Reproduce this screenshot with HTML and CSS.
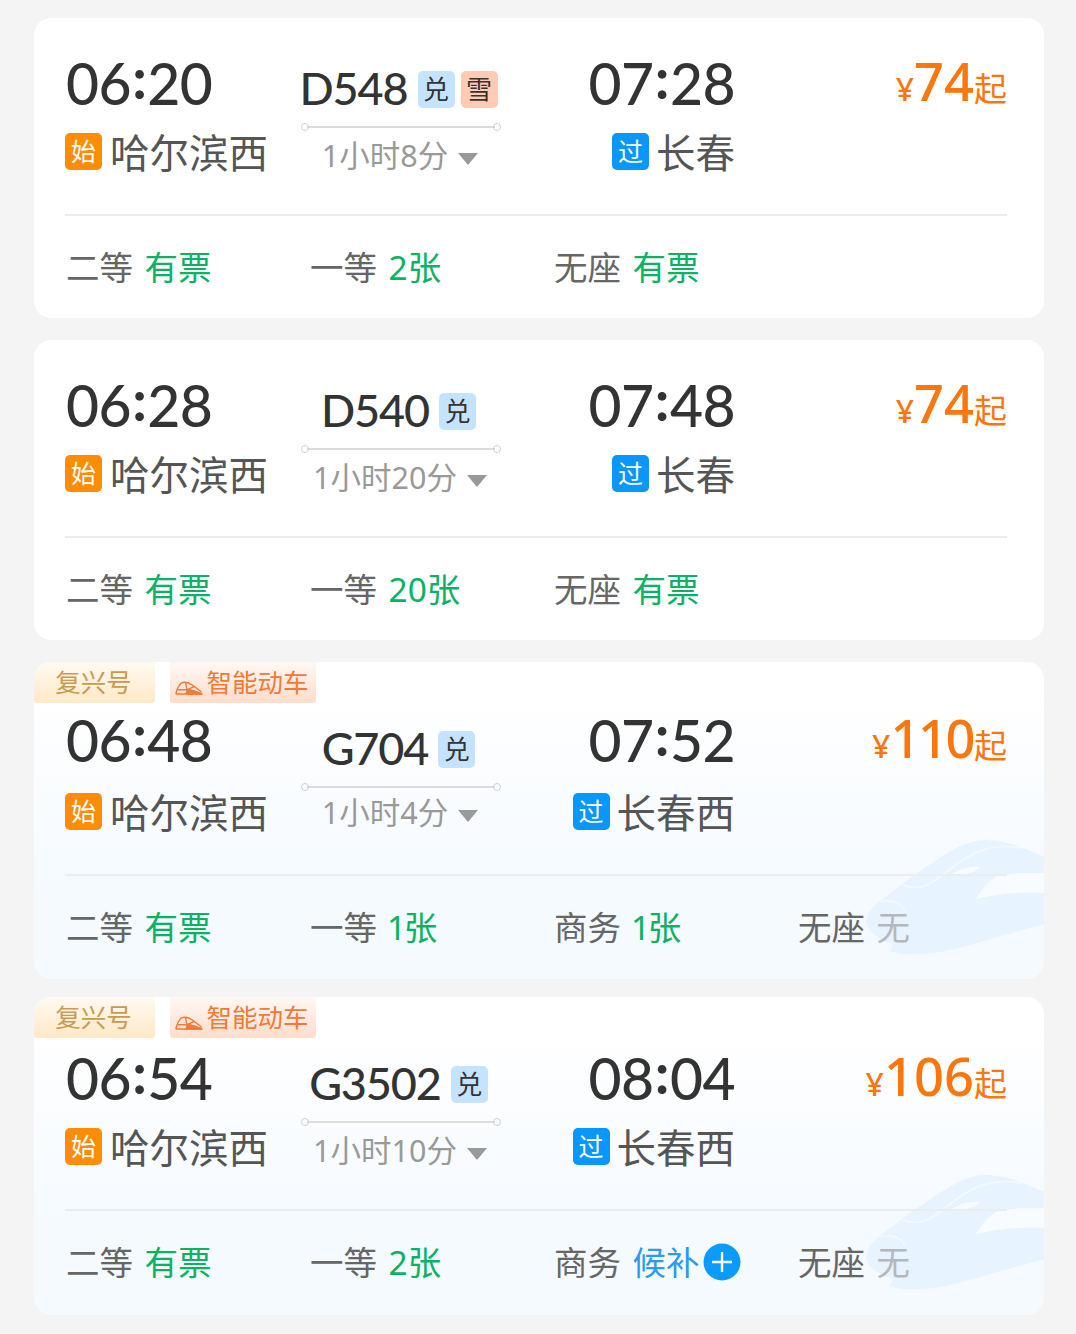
FILE: index.html
```html
<!DOCTYPE html>
<html lang="zh-CN">
<head>
    <meta charset="UTF-8">
    <meta name="viewport" content="width=device-width, initial-scale=1.0">
    <title>车次列表</title>
    <link rel="stylesheet" href="styles.css">
</head>
<body>
    <!-- shared shapes -->
    <svg class="defs" width="0" height="0">
        <symbol id="train-bg" viewBox="0 0 180 118">
            <path fill="#e7f3ff" d="M3 79C5 72 10 66 16 62C27 54 37 45 49 37C62 29 75 18 89 11C101 4 112 1 123 1C145 2 163 10 180 18V85L102 107C87 111 71 115 56 115C44 116 33 115 26 112L29 105C17 101 8 96 5 90C2 86 2 83 3 79Z"/>
            <path fill="#f8fbff" d="M112 60C118 50 124 42 132 38C145 33 162 34 180 34V54C157 53 135 54 112 60ZM85 37C94 31 102 27 116 28C112 33 103 36 85 37Z"/>
            <path fill="none" stroke="#f3f9ff" stroke-width="1.600" d="M39 46C49 50 60 49 70 42C86 31 99 17 122 10C135 6 146 7 158 9M16 63C27 60 37 63 41 72"/>
        </symbol>
        <symbol id="train-icon" viewBox="0 0 28 14">
            <path fill="none" stroke="#f07a36" stroke-width="1.400" stroke-linejoin="round" d="M.8 13C2 8 4 4 6.500 1.800C11 .3 14 1.500 18 4.500L26.500 11M2.800 8.800H12L10.500 1.500M12 8.800L19 5.500M.8 13H27"/>
            <path fill="#f07a36" d="M11.500 8.500L15 8L20 9.500L27.500 12V13.700H10.500Z"/>
        </symbol>
        <symbol id="plus" viewBox="0 0 38 38">
            <circle cx="19" cy="19" r="18.500" fill="#0a9bfb"/>
            <path stroke="#fff" stroke-width="2.400" d="M9 19H29M19 9V29"/>
        </symbol>
    </svg>

    <div class="train-list">
        <div class="card">
            <div class="trip">
                <div class="from">
                    <div class="time">06<i>:</i>20</div>
                    <div class="station"><span class="mark start">始</span>哈尔滨西</div>
                </div>
                <div class="middle">
                    <div class="number">D548<span class="badge">兑</span><span class="badge snow">雪</span></div>
                    <div class="line"></div>
                    <div class="duration">1小时8分<i class="arrow"></i></div>
                </div>
                <div class="to">
                    <div class="time">07<i>:</i>28</div>
                    <div class="station"><span class="mark pass">过</span>长春</div>
                </div>
                <div class="price"><small>¥</small><b>74</b><span>起</span></div>
            </div>
            <div class="seats">
                <div>二等<span class="ok">有票</span></div>
                <div>一等<span class="ok">2张</span></div>
                <div>无座<span class="ok">有票</span></div>
            </div>
        </div>

        <div class="card">
            <div class="trip">
                <div class="from">
                    <div class="time">06<i>:</i>28</div>
                    <div class="station"><span class="mark start">始</span>哈尔滨西</div>
                </div>
                <div class="middle">
                    <div class="number">D540<span class="badge">兑</span></div>
                    <div class="line"></div>
                    <div class="duration">1小时20分<i class="arrow"></i></div>
                </div>
                <div class="to">
                    <div class="time">07<i>:</i>48</div>
                    <div class="station"><span class="mark pass">过</span>长春</div>
                </div>
                <div class="price"><small>¥</small><b>74</b><span>起</span></div>
            </div>
            <div class="seats">
                <div>二等<span class="ok">有票</span></div>
                <div>一等<span class="ok">20张</span></div>
                <div>无座<span class="ok">有票</span></div>
            </div>
        </div>

        <div class="card smart raised">
            <svg class="train-bg"><use href="#train-bg"/></svg>
            <div class="tags">
                <span class="tag gold">复兴号</span>
                <span class="tag orange"><svg class="train-icon"><use href="#train-icon"/></svg>智能动车</span>
            </div>
            <div class="trip">
                <div class="from">
                    <div class="time">06<i>:</i>48</div>
                    <div class="station"><span class="mark start">始</span>哈尔滨西</div>
                </div>
                <div class="middle">
                    <div class="number">G704<span class="badge">兑</span></div>
                    <div class="line"></div>
                    <div class="duration">1小时4分<i class="arrow"></i></div>
                </div>
                <div class="to">
                    <div class="time">07<i>:</i>52</div>
                    <div class="station"><span class="mark pass">过</span>长春西</div>
                </div>
                <div class="price"><small>¥</small><b class="tight">110</b><span>起</span></div>
            </div>
            <div class="seats">
                <div>二等<span class="ok">有票</span></div>
                <div>一等<span class="ok tight">1张</span></div>
                <div>商务<span class="ok tight">1张</span></div>
                <div>无座<span class="none">无</span></div>
            </div>
        </div>

        <div class="card smart">
            <svg class="train-bg"><use href="#train-bg"/></svg>
            <div class="tags">
                <span class="tag gold">复兴号</span>
                <span class="tag orange"><svg class="train-icon"><use href="#train-icon"/></svg>智能动车</span>
            </div>
            <div class="trip">
                <div class="from">
                    <div class="time">06<i>:</i>54</div>
                    <div class="station"><span class="mark start">始</span>哈尔滨西</div>
                </div>
                <div class="middle">
                    <div class="number">G3502<span class="badge">兑</span></div>
                    <div class="line"></div>
                    <div class="duration">1小时10分<i class="arrow"></i></div>
                </div>
                <div class="to">
                    <div class="time">08<i>:</i>04</div>
                    <div class="station"><span class="mark pass">过</span>长春西</div>
                </div>
                <div class="price"><small>¥</small><b>106</b><span>起</span></div>
            </div>
            <div class="seats">
                <div>二等<span class="ok">有票</span></div>
                <div>一等<span class="ok">2张</span></div>
                <div>商务<span class="wait">候补</span><svg class="plus"><use href="#plus"/></svg></div>
                <div>无座<span class="none">无</span></div>
            </div>
        </div>
    </div>
</body>
</html>
```
FILE: styles.css
```css
* {
    box-sizing: border-box;
}
body {
    margin: 0;
    background-color: #f4f4f4;
    font-family: "Noto Sans", "Noto Sans CJK SC", sans-serif;
    color: #333;
}
.defs {
    display: block;
}
.train-list {
    display: flex;
    flex-direction: column;
    gap: 22px;
    padding: 18px 32px 0 34px;
}
.card {
    position: relative;
    height: 300px;
    padding: 36px 37px 0 31px;
    background-color: #fff;
    border-radius: 17px;
    overflow: hidden;
}
.smart {
    height: 318px;
    padding-top: 0;
    background: linear-gradient(#fff 10%, #f5faff 70%);
}
.smart + .smart {
    margin-top: -4px;
}
.raised {
    height: 317px;
}
.train-bg {
    position: absolute;
    right: 0;
    top: 177px;
    width: 180px;
    height: 118px;
}
.tags {
    display: flex;
    gap: 15px;
    height: 41px;
    margin: 0 0 11px -31px;
}
.tag {
    display: flex;
    align-items: center;
    justify-content: center;
    padding-bottom: 4px;
    font-size: 25.5px;
    border-radius: 0 0 3px 3px;
}
.gold {
    width: 121px;
    padding-right: 2px;
    color: #c89b50;
    background: linear-gradient(#fffaf2, #ffe8c6);
}
.orange {
    width: 146px;
    padding-right: 2px;
    color: #f07a36;
    background: linear-gradient(#fff8f4, #ffdccb);
}
.train-icon {
    width: 28px;
    height: 14px;
    margin: 14px 3px 0 0;
}
.trip {
    position: relative;
    display: grid;
    grid-template-columns: 236px 200px 234px 272px;
    height: 162px;
    border-bottom: 2px solid #ebecee;
}
.time {
    height: 60px;
    padding-left: 1px;
    font-family: Lato, sans-serif;
    font-size: 57px;
    font-weight: 500;
    line-height: 59px;
    letter-spacing: -0.5px;
}
.time i {
    display: inline-block;
    margin: 0 1px;
    font-style: normal;
    font-weight: 700;
    transform: translateY(-6px);
}
.to .time {
    text-align: right;
}
.station {
    display: flex;
    align-items: center;
    height: 50px;
    margin-top: 14px;
    font-size: 39.5px;
    line-height: 50px;
    color: #555;
}
.to .station {
    justify-content: flex-end;
}
.mark {
    width: 37px;
    height: 37px;
    margin: -4px 8px 0 0;
    border-radius: 5px;
    font-size: 25px;
    line-height: 36px;
    text-align: center;
    color: #fff;
}
.to .mark {
    margin-right: 7px;
}
.start {
    background-color: #ff8c05;
}
.pass {
    background-color: #0a97fb;
}
.number {
    display: flex;
    align-items: center;
    justify-content: center;
    height: 72px;
    padding: 0 5px 4px 0;
    font-family: Lato, "Noto Sans CJK SC", sans-serif;
    font-size: 45px;
    font-weight: 500;
    line-height: 60px;
    letter-spacing: -1.1px;
}
.badge {
    flex: none;
    width: 37px;
    height: 37px;
    margin: 3px 0 0 10px;
    border-radius: 5px;
    background-color: #c5e3ff;
    font-size: 26px;
    font-weight: 400;
    line-height: 36px;
    letter-spacing: 0;
    text-align: center;
}
.snow {
    margin-left: 6px;
    background-color: #ffcbb5;
}
.line {
    display: flex;
    align-items: center;
    justify-content: space-between;
    height: 6px;
    margin-top: -2px;
    background: linear-gradient(#dcdcdc, #dcdcdc) center / 188px 2px no-repeat;
}
.line::before,
.line::after {
    content: "";
    width: 6px;
    height: 6px;
    border: 1.5px solid #cfcfcf;
    border-radius: 50%;
}
.duration {
    display: flex;
    align-items: center;
    justify-content: center;
    height: 40px;
    margin-top: 4px;
    padding-right: 2px;
    font-size: 30.5px;
    color: #999;
}
.arrow {
    margin: 10px 0 0 10px;
    border: 10px solid transparent;
    border-top: 12px solid #999;
    border-bottom: 0;
}
.price {
    display: flex;
    align-items: baseline;
    justify-content: flex-end;
    height: 60px;
    line-height: 53px;
    color: #fb760c;
}
.price small {
    font-size: 32px;
    font-weight: 500;
}
.price b {
    font-size: 52.5px;
    font-weight: 500;
}
.price .tight {
    padding-right: 1px;
    letter-spacing: -2.5px;
}
.price span {
    font-size: 33px;
}
.seats {
    position: relative;
    display: grid;
    grid-template-columns: repeat(4, 244px);
    align-items: center;
    height: 103px;
    padding: 0 0 4px 1px;
    font-size: 33.5px;
    color: #666;
}
.seats div {
    display: flex;
    align-items: center;
}
.seats span {
    margin-left: 11.5px;
}
.seats .ok {
    color: #0bb264;
}
.seats .tight {
    margin-left: 10px;
    letter-spacing: -2.5px;
}
.seats .none {
    color: #b4b8bd;
}
.seats .wait {
    color: #2c9bf0;
}
.plus {
    width: 38px;
    height: 38px;
    margin: 3px 0 0 3px;
}
/* slightly tighter first rows */
.raised .time,
.raised .price,
.raised .duration {
    transform: translateY(-3px);
}
```
